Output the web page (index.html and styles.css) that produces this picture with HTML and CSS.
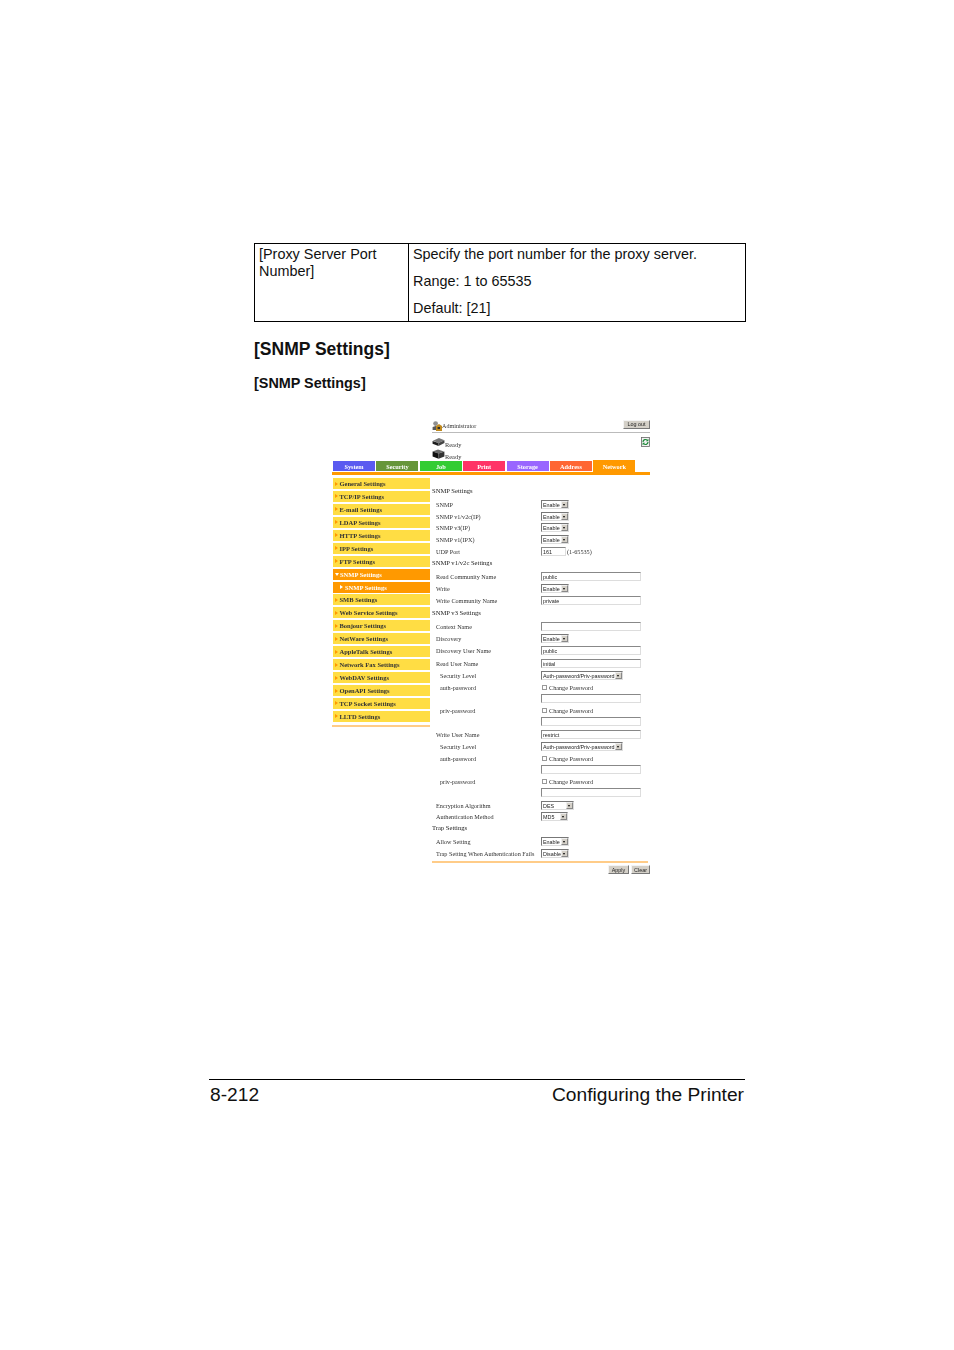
FILE: index.html
```html
<!DOCTYPE html>
<html lang="en">
<head>
<meta charset="utf-8">
<title>[SNMP Settings]</title>
<link rel="stylesheet" href="styles.css">
</head>
<body>
<main class="page">
  <table class="spec">
    <tr>
      <td class="spec-name">[Proxy Server Port Number]</td>
      <td class="spec-desc">
        <p>Specify the port number for the proxy server.</p>
        <p>Range: 1 to 65535</p>
        <p>Default: [21]</p>
      </td>
    </tr>
  </table>
  <h1>[SNMP Settings]</h1>
  <h2>[SNMP Settings]</h2>

  <figure class="shot">
    <header class="shot-head">
      <div class="admin-bar">
        <svg class="ico" viewBox="0 0 10 10"><circle cx="3.6" cy="2.6" r="2.4" fill="#8f8f8f"/><path d="M.6 9V6l3-1 3 1v3z" fill="#5a5a5a"/><path d="M4 5l3-2 3 2v5H4z" fill="#c08a1e"/><rect x="5.6" y="6" width="2.4" height="2" fill="#2e2e2e"/></svg>
        <span class="admin-name">Administrator</span>
        <span class="btn logout">Log out</span>
      </div>
      <div class="status-row">
        <svg class="ico ico-w" viewBox="0 0 14 10"><path d="M1 3.6L7.5.6 13.4 3 7 6z" fill="#777"/><path d="M.6 3.8L7 6v3.4L.6 7z" fill="#1d1d1d"/><path d="M7 6l6.4-3v3.2L7 9.4z" fill="#444"/></svg>
        <span>Ready</span>
        <svg class="refresh" viewBox="0 0 9 10"><rect x=".5" y=".5" width="8" height="9" fill="#f1f1f1" stroke="#666" stroke-width=".8"/><path d="M2 5A2.5 2.5 0 0 1 6.4 3.4M7 5A2.5 2.5 0 0 1 2.6 6.6" fill="none" stroke="#1f8a3a" stroke-width="1.2"/><path d="M7.4 1.8v2.4H5zM1.6 8.2V5.8H4z" fill="#1f8a3a"/></svg>
      </div>
      <div class="status-row status-low">
        <svg class="ico ico-w" viewBox="0 0 13 10"><path d="M.6 2.4L6 .4l6 2-5.4 2z" fill="#6a6a6a"/><path d="M.6 2.6l6 2v5.2L.6 7.6z" fill="#111"/><path d="M6.6 4.6l5.8-2.2v5.2L6.6 9.8z" fill="#333"/></svg>
        <span>Ready</span>
      </div>
    </header>

    <nav class="tabs">
      <span class="tab t-system">System</span>
      <span class="tab t-security">Security</span>
      <span class="tab t-job">Job</span>
      <span class="tab t-print">Print</span>
      <span class="tab t-storage">Storage</span>
      <span class="tab t-address">Address</span>
      <span class="tab t-network">Network</span>
    </nav>

    <div class="shot-body">
      <aside class="side">
        <a class="item">General Settings</a>
        <a class="item">TCP/IP Settings</a>
        <a class="item">E-mail Settings</a>
        <a class="item">LDAP Settings</a>
        <a class="item">HTTP Settings</a>
        <a class="item">IPP Settings</a>
        <a class="item">FTP Settings</a>
        <a class="item open">SNMP Settings</a>
        <a class="item sub">SNMP Settings</a>
        <a class="item">SMB Settings</a>
        <a class="item">Web Service Settings</a>
        <a class="item">Bonjour Settings</a>
        <a class="item">NetWare Settings</a>
        <a class="item">AppleTalk Settings</a>
        <a class="item">Network Fax Settings</a>
        <a class="item">WebDAV Settings</a>
        <a class="item">OpenAPI Settings</a>
        <a class="item">TCP Socket Settings</a>
        <a class="item">LLTD Settings</a>
        <div class="side-end"></div>
      </aside>

      <section class="form">
        <div class="row title">SNMP Settings</div>
        <div class="row g3"><label>SNMP</label><span class="sel w28">Enable<i></i></span></div>
        <div class="row g1"><label>SNMP v1/v2c(IP)</label><span class="sel w28">Enable<i></i></span></div>
        <div class="row g0"><label>SNMP v3(IP)</label><span class="sel w28">Enable<i></i></span></div>
        <div class="row g1"><label>SNMP v1(IPX)</label><span class="sel w28">Enable<i></i></span></div>
        <div class="row g1"><label>UDP Port</label><span class="inp w25">161</span><span class="hint">(1-65535)</span></div>
        <div class="row title g0">SNMP v1/v2c Settings</div>
        <div class="row g3"><label>Read Community Name</label><span class="inp w100">public</span></div>
        <div class="row g1"><label>Write</label><span class="sel w28">Enable<i></i></span></div>
        <div class="row g1"><label>Write Community Name</label><span class="inp w100">private</span></div>
        <div class="row title g1">SNMP v3 Settings</div>
        <div class="row g3"><label>Context Name</label><span class="inp w100"></span></div>
        <div class="row g1"><label>Discovery</label><span class="sel w28">Enable<i></i></span></div>
        <div class="row g1"><label>Discovery User Name</label><span class="inp w100">public</span></div>
        <div class="row g2"><label>Read User Name</label><span class="inp w100">initial</span></div>
        <div class="row g1"><label class="deep">Security Level</label><span class="sel w82">Auth-password/Priv-password<i></i></span></div>
        <div class="row g1"><label class="deep">auth-password</label><span class="chk"><b></b>Change Password</span></div>
        <div class="row g0"><label></label><span class="inp w100"></span></div>
        <div class="row g1"><label class="deep">priv-password</label><span class="chk"><b></b>Change Password</span></div>
        <div class="row g0"><label></label><span class="inp w100"></span></div>
        <div class="row g2"><label>Write User Name</label><span class="inp w100">restrict</span></div>
        <div class="row g1"><label class="deep">Security Level</label><span class="sel w82">Auth-password/Priv-password<i></i></span></div>
        <div class="row g1"><label class="deep">auth-password</label><span class="chk"><b></b>Change Password</span></div>
        <div class="row g0"><label></label><span class="inp w100"></span></div>
        <div class="row g1"><label class="deep">priv-password</label><span class="chk"><b></b>Change Password</span></div>
        <div class="row g0"><label></label><span class="inp w100"></span></div>
        <div class="row g2"><label>Encryption Algorithm</label><span class="sel w33">DES<i></i></span></div>
        <div class="row g0"><label>Authentication Method</label><span class="sel w27">MD5<i></i></span></div>
        <div class="row title g0">Trap Settings</div>
        <div class="row g3"><label>Allow Setting</label><span class="sel w28">Enable<i></i></span></div>
        <div class="row g1"><label>Trap Setting When Authentication Fails</label><span class="sel w28">Disable<i></i></span></div>
        <div class="form-rule"></div>
        <div class="actions"><span class="btn apply">Apply</span><span class="btn clear">Clear</span></div>
      </section>
    </div>
  </figure>
</main>
<footer class="foot">
  <span>8-212</span>
  <span>Configuring the Printer</span>
</footer>
</body>
</html>
```
FILE: styles.css
```css
* { box-sizing: border-box; }
html, body { margin: 0; padding: 0; background: #fff; }
body {
  width: 954px; height: 1350px; overflow: hidden; color: #111;
  font-family: "Liberation Sans", Arial, sans-serif;
  display: flex; flex-direction: column;
}
.page { padding: 243px 208px 0 254px; height: 1079px; }

.spec { width: 492px; height: 79px; border-collapse: collapse; table-layout: fixed; }
.spec td { border: 1px solid #000; vertical-align: top; font-size: 14.4px; line-height: 16.5px; padding: 2px 4px 0; }
.spec-name { width: 154px; }
.spec-desc p { margin: 0 0 10.5px; }
.spec-desc p:last-child { margin-bottom: 0; }

h1 { font-size: 17.5px; line-height: 20px; margin: 17px 0 0; font-weight: 700; }
h2 { font-size: 14.4px; line-height: 17px; margin: 16px 0 0; font-weight: 700; }

.shot {
  margin: 27px 0 0 78px; width: 318px; height: 456px;
  font-family: "Liberation Serif", "Times New Roman", serif; font-size: 6.2px; color: #333;
  filter: blur(.45px);
}
.shot-head { margin-left: 100px; height: 42px; position: relative; }
.admin-bar { height: 14px; border-bottom: 1px solid #bbb; display: flex; align-items: center; }
.admin-name { flex: 1; margin-top: 1px; font-size: 6.1px; }
.ico { width: 10px; height: 10px; flex: none; }
.ico-w { width: 13px; height: 10px; }
.btn {
  background: #d4d0c8; border: 1px solid; border-color: #f4f4f4 #777 #777 #f4f4f4;
  font-family: "Liberation Sans", Arial, sans-serif; font-size: 5.4px; color: #222;
  display: flex; align-items: center; justify-content: center; height: 9px;
}
.logout { width: 27px; margin-top: -3px; }
.status-row { height: 12px; display: flex; align-items: flex-end; margin-top: 2px; position: relative; }
.status-low { margin-top: 0; }
.status-row span { margin-left: 0; margin-bottom: -1px; font-size: 6.4px; }
.refresh { position: absolute; right: 0; top: 2px; width: 9px; height: 10px; }

.tabs { display: flex; gap: 1.4px; margin-left: 1px; height: 11px; }
.tab {
  width: 42px; height: 10px; color: #fff; font-weight: 700; font-size: 6.3px;
  display: flex; align-items: center; justify-content: center;
}
.t-system { background: #5a5af0; }
.t-security { background: #66963a; }
.t-job { background: #33cc33; }
.t-print { background: #ff3366; }
.t-storage { background: #9966ff; }
.t-address { background: #ff6633; }
.t-network { background: #ff9900; height: 12px; margin-top: -1px; }

.shot-body { border-top: 3px solid #ff9900; display: flex; padding-top: 3px; }
.side { width: 97px; margin-left: 1px; display: flex; flex-direction: column; flex: none; }
.item {
  height: 11px; margin-bottom: 1.94px; background: #ffdd44; color: #333; font-weight: 700; font-size: 6.5px;
  display: flex; align-items: center; padding-left: 1.5px; white-space: nowrap;
}
.item::before {
  content: ""; width: 0; height: 0; margin-right: 2px;
  border-left: 3.5px solid #ff9900; border-top: 2px solid transparent; border-bottom: 2px solid transparent;
}
.item.open, .item.sub { background: #ff9900; color: #fff; }
.item.open::before { border-left: 2px solid transparent; border-right: 2px solid transparent; border-top: 3.5px solid #fff; border-bottom: 0; margin-right: 1.5px; }
.item.sub { padding-left: 7px; }
.item.sub::before { border-left-color: #fff; }
.side-end { height: 2px; background: #ffcc88; margin-top: 1px; margin-left: -1px; }

.form { margin-left: 2px; width: 218px; padding-top: 7px; }
.row { height: 11px; display: flex; align-items: center; white-space: nowrap; }
.row label { width: 109px; padding-left: 4px; flex: none; }
.row label.deep { padding-left: 8px; }
.title { color: #222; font-size: 6.6px; }
.g0 { margin-top: 0; }
.g1 { margin-top: 1px; }
.g2 { margin-top: 2px; }
.g3 { margin-top: 3px; }

.sel, .inp { font-family: "Liberation Sans", Arial, sans-serif; font-size: 5.4px; color: #222; display: flex; align-items: center; background: #fff; }
.sel { height: 9px; border: 1px solid; border-color: #777 #ddd #ddd #777; padding-left: 1px; justify-content: space-between; }
.sel i { width: 7px; height: 7px; background: #d4d0c8; position: relative; flex: none; border: 1px solid; border-color: #eee #888 #888 #eee; }
.sel i::after { content: ""; position: absolute; left: 1px; top: 1.5px; border-left: 1.5px solid transparent; border-right: 1.5px solid transparent; border-top: 2px solid #000; }
.inp { height: 9px; border: 1px solid; border-color: #888 #ddd #ddd #888; padding-left: 1px; }
.w25 { width: 25px; }
.w27 { width: 27px; }
.w28 { width: 28px; }
.w33 { width: 33px; }
.w82 { width: 82px; }
.w100 { width: 100px; }
.hint { margin-left: 1px; }
.chk { display: flex; align-items: center; padding-left: 1px; }
.chk b { width: 5px; height: 5px; border: 1px solid #999; background: #fff; margin-right: 2px; }

.form-rule { height: 2px; background: #ffcc88; margin: 2px 2px 0 0; }
.actions { display: flex; justify-content: flex-end; gap: 2px; margin-top: 2px; }
.apply { width: 21px; }
.clear { width: 19px; }

.foot {
  margin-left: 209px; width: 536px; border-top: 1px solid #000; padding: 3px 1px 0;
  display: flex; justify-content: space-between; font-size: 19.2px; line-height: 23px;
}
```
